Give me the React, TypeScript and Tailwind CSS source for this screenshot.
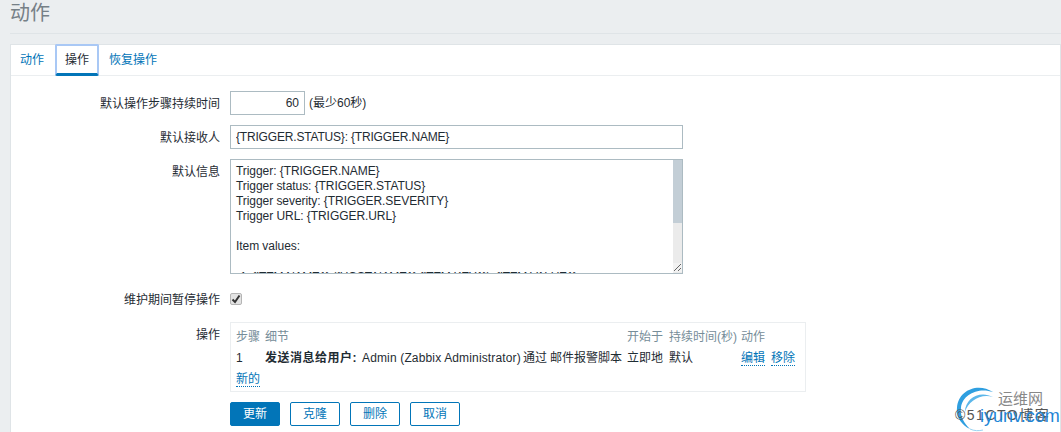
const font = { fontFamily: '"Liberation Sans", "Noto Sans CJK SC", sans-serif' };

function Row({ label, children, className }: { label: string; children: React.ReactNode; className?: string }) {
  return (
    <div className={`flex ${className ?? ""}`}>
      <div className="w-[209px] shrink-0 pt-[5px] text-right text-[12px] leading-[16px] text-[#1f2c33]">{label}</div>
      <div className="ml-[10px] flex-1">{children}</div>
    </div>
  );
}

const linkCls = "text-[#0275b8] border-b border-dotted border-[#0275b8] leading-[14px] inline-block";

function Btn({ children, primary }: { children: React.ReactNode; primary?: boolean }) {
  return (
    <button
      className={
        primary
          ? "h-[24px] w-[50px] rounded-[2px] bg-[#0275b8] text-white text-[12px] border border-[#0275b8]"
          : "h-[24px] w-[50px] rounded-[2px] bg-white text-[#0275b8] text-[12px] border border-[#0275b8]"
      }
    >
      {children}
    </button>
  );
}

export default function App() {
  return (
    <div className="relative h-[432px] w-[1061px] overflow-hidden bg-[#ebeef0] text-[#1f2c33]" style={font}>
      <div className="ml-[10px] h-[34px] border-b border-[#dfe4e7]">
        <h1 className="text-[20px] leading-[26px] text-[#768087]">动作</h1>
      </div>
      <div className="ml-[10px] mt-[10px] h-[400px] border border-[#dfe4e7] bg-white">
        <div className="flex h-[31px] border-b border-[#ebeef0] text-[12px]">
          <div className="flex h-[30px] w-[44px] items-center justify-center pr-[2px] text-[#0275b8]">动作</div>
          <div className="-mt-[1px] flex h-[32px] w-[44px] items-center justify-center rounded-[2px] border-2 border-[#a9c8f5] border-b-[#0275b8] text-[#1f2c33]" style={{ borderBottomWidth: 3 }}>操作</div>
          <div className="flex h-[30px] items-center pl-[10px] text-[#0275b8]">恢复操作</div>
        </div>

        <div className="mt-[15px] flex flex-col">
          <Row label="默认操作步骤持续时间">
            <div className="flex items-center">
              <input readOnly value="60" className="h-[24px] w-[75px] border border-[#acbbc2] px-[5px] text-right text-[12px] outline-none" />
              <span className="ml-[4px] text-[12px]">(最少60秒)</span>
            </div>
          </Row>
          <Row label="默认接收人" className="mt-[10px]">
            <input readOnly value="{TRIGGER.STATUS}: {TRIGGER.NAME}" className="block h-[24px] w-[453px] border border-[#acbbc2] px-[5px] text-[12px] tracking-[-0.18px] outline-none" />
          </Row>
          <Row label="默认信息" className="mt-[10px]">
            <div className="relative h-[115px] w-[453px] overflow-hidden border border-[#acbbc2] pl-[5px] pt-[4px] text-[12px] leading-[15px] tracking-[-0.06px]">
              <div>Trigger: {"{TRIGGER.NAME}"}</div>
              <div>Trigger status: {"{TRIGGER.STATUS}"}</div>
              <div>Trigger severity: {"{TRIGGER.SEVERITY}"}</div>
              <div>Trigger URL: {"{TRIGGER.URL}"}</div>
              <div className="h-[15px]" />
              <div>Item values:</div>
              <div className="h-[15px]" />
              <div className="mt-[1px] whitespace-nowrap pl-[4px] tracking-[-0.35px]">1. {"{ITEM.NAME1} ({HOST.NAME1}:{ITEM.KEY1}): {ITEM.VALUE1}"}</div>
              <div className="absolute right-0 top-0 h-full w-[9px] bg-[#ebebeb]">
                <div className="h-[63px] bg-[#c3ced6]" />
              </div>
              <svg className="absolute bottom-[1px] right-0" width="9" height="9" viewBox="0 0 9 9">
                <rect width="9" height="9" fill="#f2f2f2" />
                <path d="M1 8 L8 1 M5 8 L8 5" stroke="#666" strokeWidth="1" />
              </svg>
            </div>
          </Row>
          <Row label="维护期间暂停操作" className="mt-[13px]">
            <div className="flex h-[24px] items-center">
              <div className="flex h-[12px] w-[12px] items-center justify-center rounded-[2px] border border-[#b5b5b5] bg-[#e3e3e3]">
                <svg width="10" height="10" viewBox="0 0 10 10">
                  <path d="M1.5 5.5 L4 8 L8.5 1.5" fill="none" stroke="#333" strokeWidth="2" />
                </svg>
              </div>
            </div>
          </Row>
          <Row label="操作" className="mt-[11px]">
            <div className="h-[70px] w-[576px] border border-[#ebeef0] pl-[5px] pt-[5px] text-[12px]">
              <div className="flex h-[17px] items-center text-[#768d99]">
                <span className="w-[29px]">步骤</span>
                <span className="w-[362px]">细节</span>
                <span className="w-[36px]">开始于</span>
                <span className="ml-[6px] w-[72px] whitespace-nowrap">持续时间(秒)</span>
                <span>动作</span>
              </div>
              <div className="mt-[4px] flex h-[18px] items-center whitespace-nowrap">
                <span className="w-[29px]">1</span>
                <span className="w-[362px]">
                  <b className="tracking-[0.5px]">发送消息给用户:</b>
                  <span className="ml-[5px] tracking-[0.15px]">Admin (Zabbix Administrator)</span>
                  <span className="ml-[2px]">通过</span>
                  <span className="ml-[3px]">邮件报警脚本</span>
                </span>
                <span className="w-[36px]">立即地</span>
                <span className="ml-[6px] w-[72px]">默认</span>
                <span className={linkCls}>编辑</span>
                <span className={`${linkCls} ml-[6px]`}>移除</span>
              </div>
              <div className="mt-[3px] h-[18px]">
                <span className={linkCls}>新的</span>
              </div>
            </div>
            <div className="mt-[10px] flex gap-[10px]">
              <Btn primary>更新</Btn>
              <Btn>克隆</Btn>
              <Btn>删除</Btn>
              <Btn>取消</Btn>
            </div>
          </Row>
        </div>
      </div>

      <div className="absolute left-[952px] top-[384px] h-[48px] w-[109px]">
        <svg className="absolute left-[0px] top-[0px]" width="48" height="48" viewBox="0 0 48 48">
          <path d="M41 8 C26 -2 6 6 5 24 C4 32 9 41 18 45 C11 38 8 31 9 24 C10 10 27 3 41 8 Z" fill="#2f9fe0" />
          <path d="M41 13 C28 6 13 14 13 28 C16 17 29 9 41 13 Z" fill="#5cb7ea" />
          <path d="M18 45 C22 47 27 47 31 46" fill="none" stroke="#9ad4f2" strokeWidth="1" />
        </svg>
        <div className="absolute left-[46px] top-[7px] whitespace-nowrap text-[15px] leading-[16px] text-[#888]">运维网</div>
        <div className="absolute left-[3px] top-[24px] whitespace-nowrap text-[14px] leading-[15px] tracking-[1.5px] text-[#555]">©51CTO博客</div>
        <div className="absolute left-[28px] top-[23px] whitespace-nowrap text-[18px] font-medium leading-[18px] text-[#1f86d6]">iyunv.com</div>
      </div>
    </div>
  );
}
